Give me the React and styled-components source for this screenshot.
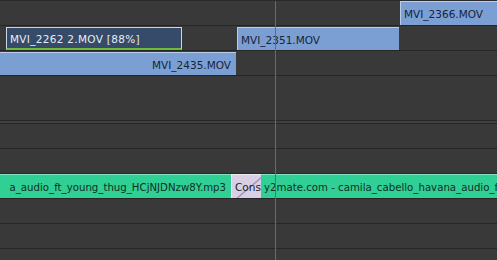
import React from "react";
import styled, { createGlobalStyle, css } from "styled-components";

const Global = createGlobalStyle`
  html, body { margin: 0; padding: 0; background: #393939; }
  body { font-family: "DejaVu Sans", Verdana, sans-serif; }
`;

const Timeline = styled.div`
  position: relative;
  width: 497px;
  height: 260px;
  overflow: hidden;
  background: #393939;
  border-top: 1px solid #2a2a2a;
  display: flex;
  flex-direction: column;
`;

const Track = styled.div`
  position: relative;
  flex: none;
  height: ${(p) => p.h || 24}px;
  border-bottom: 1px solid #262626;
`;

const Divider = styled.div`
  flex: none;
  height: 2px;
  background: #404040;
  border-bottom: 1px solid #262626;
`;

const Clip = styled.div`
  position: absolute;
  top: ${(p) => p.top ?? 1}px;
  height: ${(p) => p.h ?? 23}px;
  box-sizing: border-box;
  display: flex;
  align-items: center;
  justify-content: ${(p) => (p.right ? "flex-end" : "flex-start")};
  padding: ${(p) => (p.right ? "1px 5px 0 0" : "1px 0 0 3px")};
  font-size: 10.5px;
  white-space: nowrap;
  overflow: hidden;
  ${(p) =>
    p.kind === "video" &&
    css`
      background: #7b9fd3;
      color: #16233a;
      border-top: 1px solid #b9cdea;
      border-left: 1px solid #b9cdea;
    `}
  ${(p) =>
    p.kind === "selected" &&
    css`
      background: #354b69;
      color: #e6edf6;
      border: 1px solid #c9d6e8;
      border-bottom: 2px solid #6dbb3b;
      letter-spacing: 0.3px;
    `}
  ${(p) =>
    p.kind === "audio" &&
    css`
      background: #2fcf95;
      color: #0f2f22;
      border-top: 1px solid #7fe6c0;
      font-size: 10.2px;
    `}
`;

const Transition = styled.div`
  position: absolute;
  top: 0;
  height: 24px;
  box-sizing: border-box;
  background: #d8cfe4;
  border-left: 1px solid #f0ecf6;
  border-top: 1px solid #f0ecf6;
  color: #1c1c24;
  font-size: 10.5px;
  display: flex;
  align-items: center;
  padding: 1px 0 0 3px;
  overflow: hidden;
  white-space: nowrap;
  svg { position: absolute; inset: 0; }
  span { position: relative; }
`;

const Playhead = styled.div`
  position: absolute;
  z-index: 10;
  top: 0;
  height: 260px;
  left: 275px;
  width: 1px;
  background-color: #ec3a14;
`;

export default function App() {
  return (
    <>
      <Global />
      <Timeline>
        <Track>
          <Clip kind="video" top={0} h={24} style={{ left: 400, width: 100 }}>
            MVI_2366.MOV
          </Clip>
        </Track>
        <Track>
          <Clip kind="selected" style={{ left: 6, width: 176 }}>
            MVI_2262 2.MOV [88%]
          </Clip>
          <Clip kind="video" style={{ left: 237, width: 162 }}>
            MVI_2351.MOV
          </Clip>
        </Track>
        <Track>
          <Clip kind="video" right style={{ left: -2, width: 238 }}>
            MVI_2435.MOV
          </Clip>
        </Track>
        <Track h={44} />
        <Divider />
        <Track />
        <Track />
        <Track>
          <Clip kind="audio" right top={0} h={24} style={{ left: -20, width: 251 }}>
            a_audio_ft_young_thug_HCjNJDNzw8Y.mp3
          </Clip>
          <Transition style={{ left: 231, width: 30 }}>
            <svg width="30" height="24">
              <line x1="4" y1="24" x2="30" y2="2" stroke="#9d8fb0" strokeWidth="1.2" />
            </svg>
            <span>Cons</span>
          </Transition>
          <Clip kind="audio" top={0} h={24} style={{ left: 261, width: 236 }}>
            y2mate.com - camila_cabello_havana_audio_f
          </Clip>
        </Track>
        <Track />
        <Track />
        <Track h={12} />
        <Playhead />
      </Timeline>
    </>
  );
}
